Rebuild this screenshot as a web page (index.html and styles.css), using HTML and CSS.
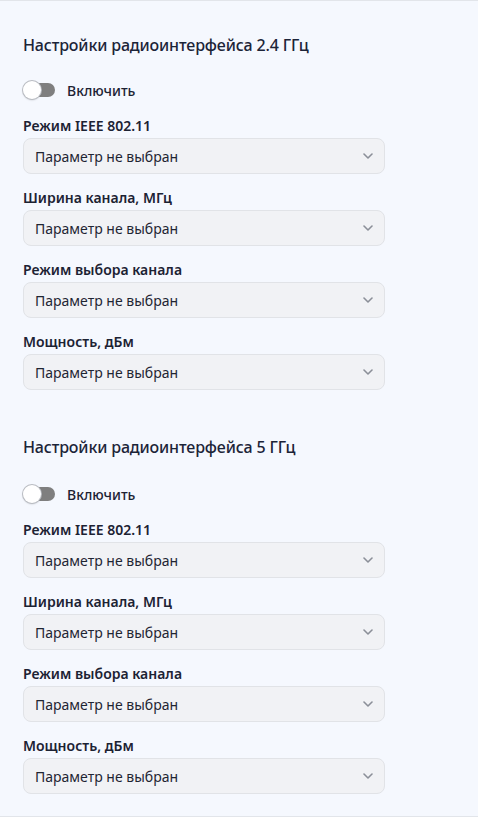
FILE: index.html
```html
<!DOCTYPE html>
<html lang="ru">
<head>
<meta charset="utf-8">
<title>Настройки радиоинтерфейса</title>
<link rel="stylesheet" href="styles.css">
</head>
<body>
<div class="panel">
  <section class="section">
    <h2 class="title">Настройки радиоинтерфейса 2.4 ГГц</h2>
    <label class="toggle-row"><span class="toggle"><span class="knob"></span></span><span class="toggle-text">Включить</span></label>
    <div class="field">
      <div class="label">Режим IEEE 802.11</div>
      <div class="select"><span>Параметр не выбран</span><svg class="chev" width="10" height="6" viewBox="0 0 10 6"><path d="M1 1l4 4 4-4" fill="none" stroke="#8b8f98" stroke-width="1.6" stroke-linecap="round" stroke-linejoin="round"/></svg></div>
    </div>
    <div class="field">
      <div class="label">Ширина канала, МГц</div>
      <div class="select"><span>Параметр не выбран</span><svg class="chev" width="10" height="6" viewBox="0 0 10 6"><path d="M1 1l4 4 4-4" fill="none" stroke="#8b8f98" stroke-width="1.6" stroke-linecap="round" stroke-linejoin="round"/></svg></div>
    </div>
    <div class="field">
      <div class="label">Режим выбора канала</div>
      <div class="select"><span>Параметр не выбран</span><svg class="chev" width="10" height="6" viewBox="0 0 10 6"><path d="M1 1l4 4 4-4" fill="none" stroke="#8b8f98" stroke-width="1.6" stroke-linecap="round" stroke-linejoin="round"/></svg></div>
    </div>
    <div class="field">
      <div class="label">Мощность, дБм</div>
      <div class="select"><span>Параметр не выбран</span><svg class="chev" width="10" height="6" viewBox="0 0 10 6"><path d="M1 1l4 4 4-4" fill="none" stroke="#8b8f98" stroke-width="1.6" stroke-linecap="round" stroke-linejoin="round"/></svg></div>
    </div>
  </section>
  <section class="section second">
    <h2 class="title">Настройки радиоинтерфейса 5 ГГц</h2>
    <label class="toggle-row"><span class="toggle"><span class="knob"></span></span><span class="toggle-text">Включить</span></label>
    <div class="field">
      <div class="label">Режим IEEE 802.11</div>
      <div class="select"><span>Параметр не выбран</span><svg class="chev" width="10" height="6" viewBox="0 0 10 6"><path d="M1 1l4 4 4-4" fill="none" stroke="#8b8f98" stroke-width="1.6" stroke-linecap="round" stroke-linejoin="round"/></svg></div>
    </div>
    <div class="field">
      <div class="label">Ширина канала, МГц</div>
      <div class="select"><span>Параметр не выбран</span><svg class="chev" width="10" height="6" viewBox="0 0 10 6"><path d="M1 1l4 4 4-4" fill="none" stroke="#8b8f98" stroke-width="1.6" stroke-linecap="round" stroke-linejoin="round"/></svg></div>
    </div>
    <div class="field">
      <div class="label">Режим выбора канала</div>
      <div class="select"><span>Параметр не выбран</span><svg class="chev" width="10" height="6" viewBox="0 0 10 6"><path d="M1 1l4 4 4-4" fill="none" stroke="#8b8f98" stroke-width="1.6" stroke-linecap="round" stroke-linejoin="round"/></svg></div>
    </div>
    <div class="field">
      <div class="label">Мощность, дБм</div>
      <div class="select"><span>Параметр не выбран</span><svg class="chev" width="10" height="6" viewBox="0 0 10 6"><path d="M1 1l4 4 4-4" fill="none" stroke="#8b8f98" stroke-width="1.6" stroke-linecap="round" stroke-linejoin="round"/></svg></div>
    </div>
  </section>
</div>
</body>
</html>
```
FILE: styles.css
```css
html, body {
  margin: 0;
  padding: 0;
  background: #ffffff;
}
body {
  font-family: "Noto Sans", "Open Sans", sans-serif;
  color: #1c2233;
}
.panel {
  width: 478px;
  box-sizing: border-box;
  background: #f5f8fe;
  border-top: 1px solid #e2e5ea;
  border-bottom: 1px solid #e2e5ea;
  padding: 32px 93px 22px 23px;
  display: flex;
  flex-direction: column;
  gap: 45px;
}
.section {
  display: flex;
  flex-direction: column;
}
.title {
  margin: 0;
  font-size: 16px;
  line-height: 24px;
  font-weight: 500;
  letter-spacing: -0.15px;
  color: #1c2438;
}
.toggle-row {
  display: flex;
  align-items: center;
  gap: 12px;
  margin-top: 23px;
  height: 20px;
  margin-bottom: 16px;
}
.second .toggle-row {
  margin-top: 25px;
}
.toggle {
  position: relative;
  width: 32px;
  height: 14px;
  border-radius: 7px;
  background: #7f7f7f;
  display: block;
}
.knob {
  position: absolute;
  left: 0;
  top: -2px;
  width: 18px;
  height: 18px;
  border-radius: 50%;
  background: #ffffff;
  box-shadow: 0 0 0 1px #b9bcc2, 0 1px 2px rgba(0,0,0,0.25);
}
.toggle-text {
  font-size: 14px;
  font-weight: 500;
  color: #1c2233;
}
.field {
  display: flex;
  flex-direction: column;
  gap: 2px;
  margin-bottom: 14px;
}
.field:last-child {
  margin-bottom: 0;
}
.label {
  font-size: 14px;
  line-height: 20px;
  font-weight: 600;
  color: #1c2233;
}
.select {
  height: 36px;
  box-sizing: border-box;
  border: 1px solid #e1e3e7;
  border-radius: 8px;
  background: #f1f2f5;
  display: flex;
  align-items: center;
  justify-content: space-between;
  padding: 0 11px 0 11px;
  font-size: 14px;
  color: #1f2533;
}
.chev {
  display: block;
}
```
